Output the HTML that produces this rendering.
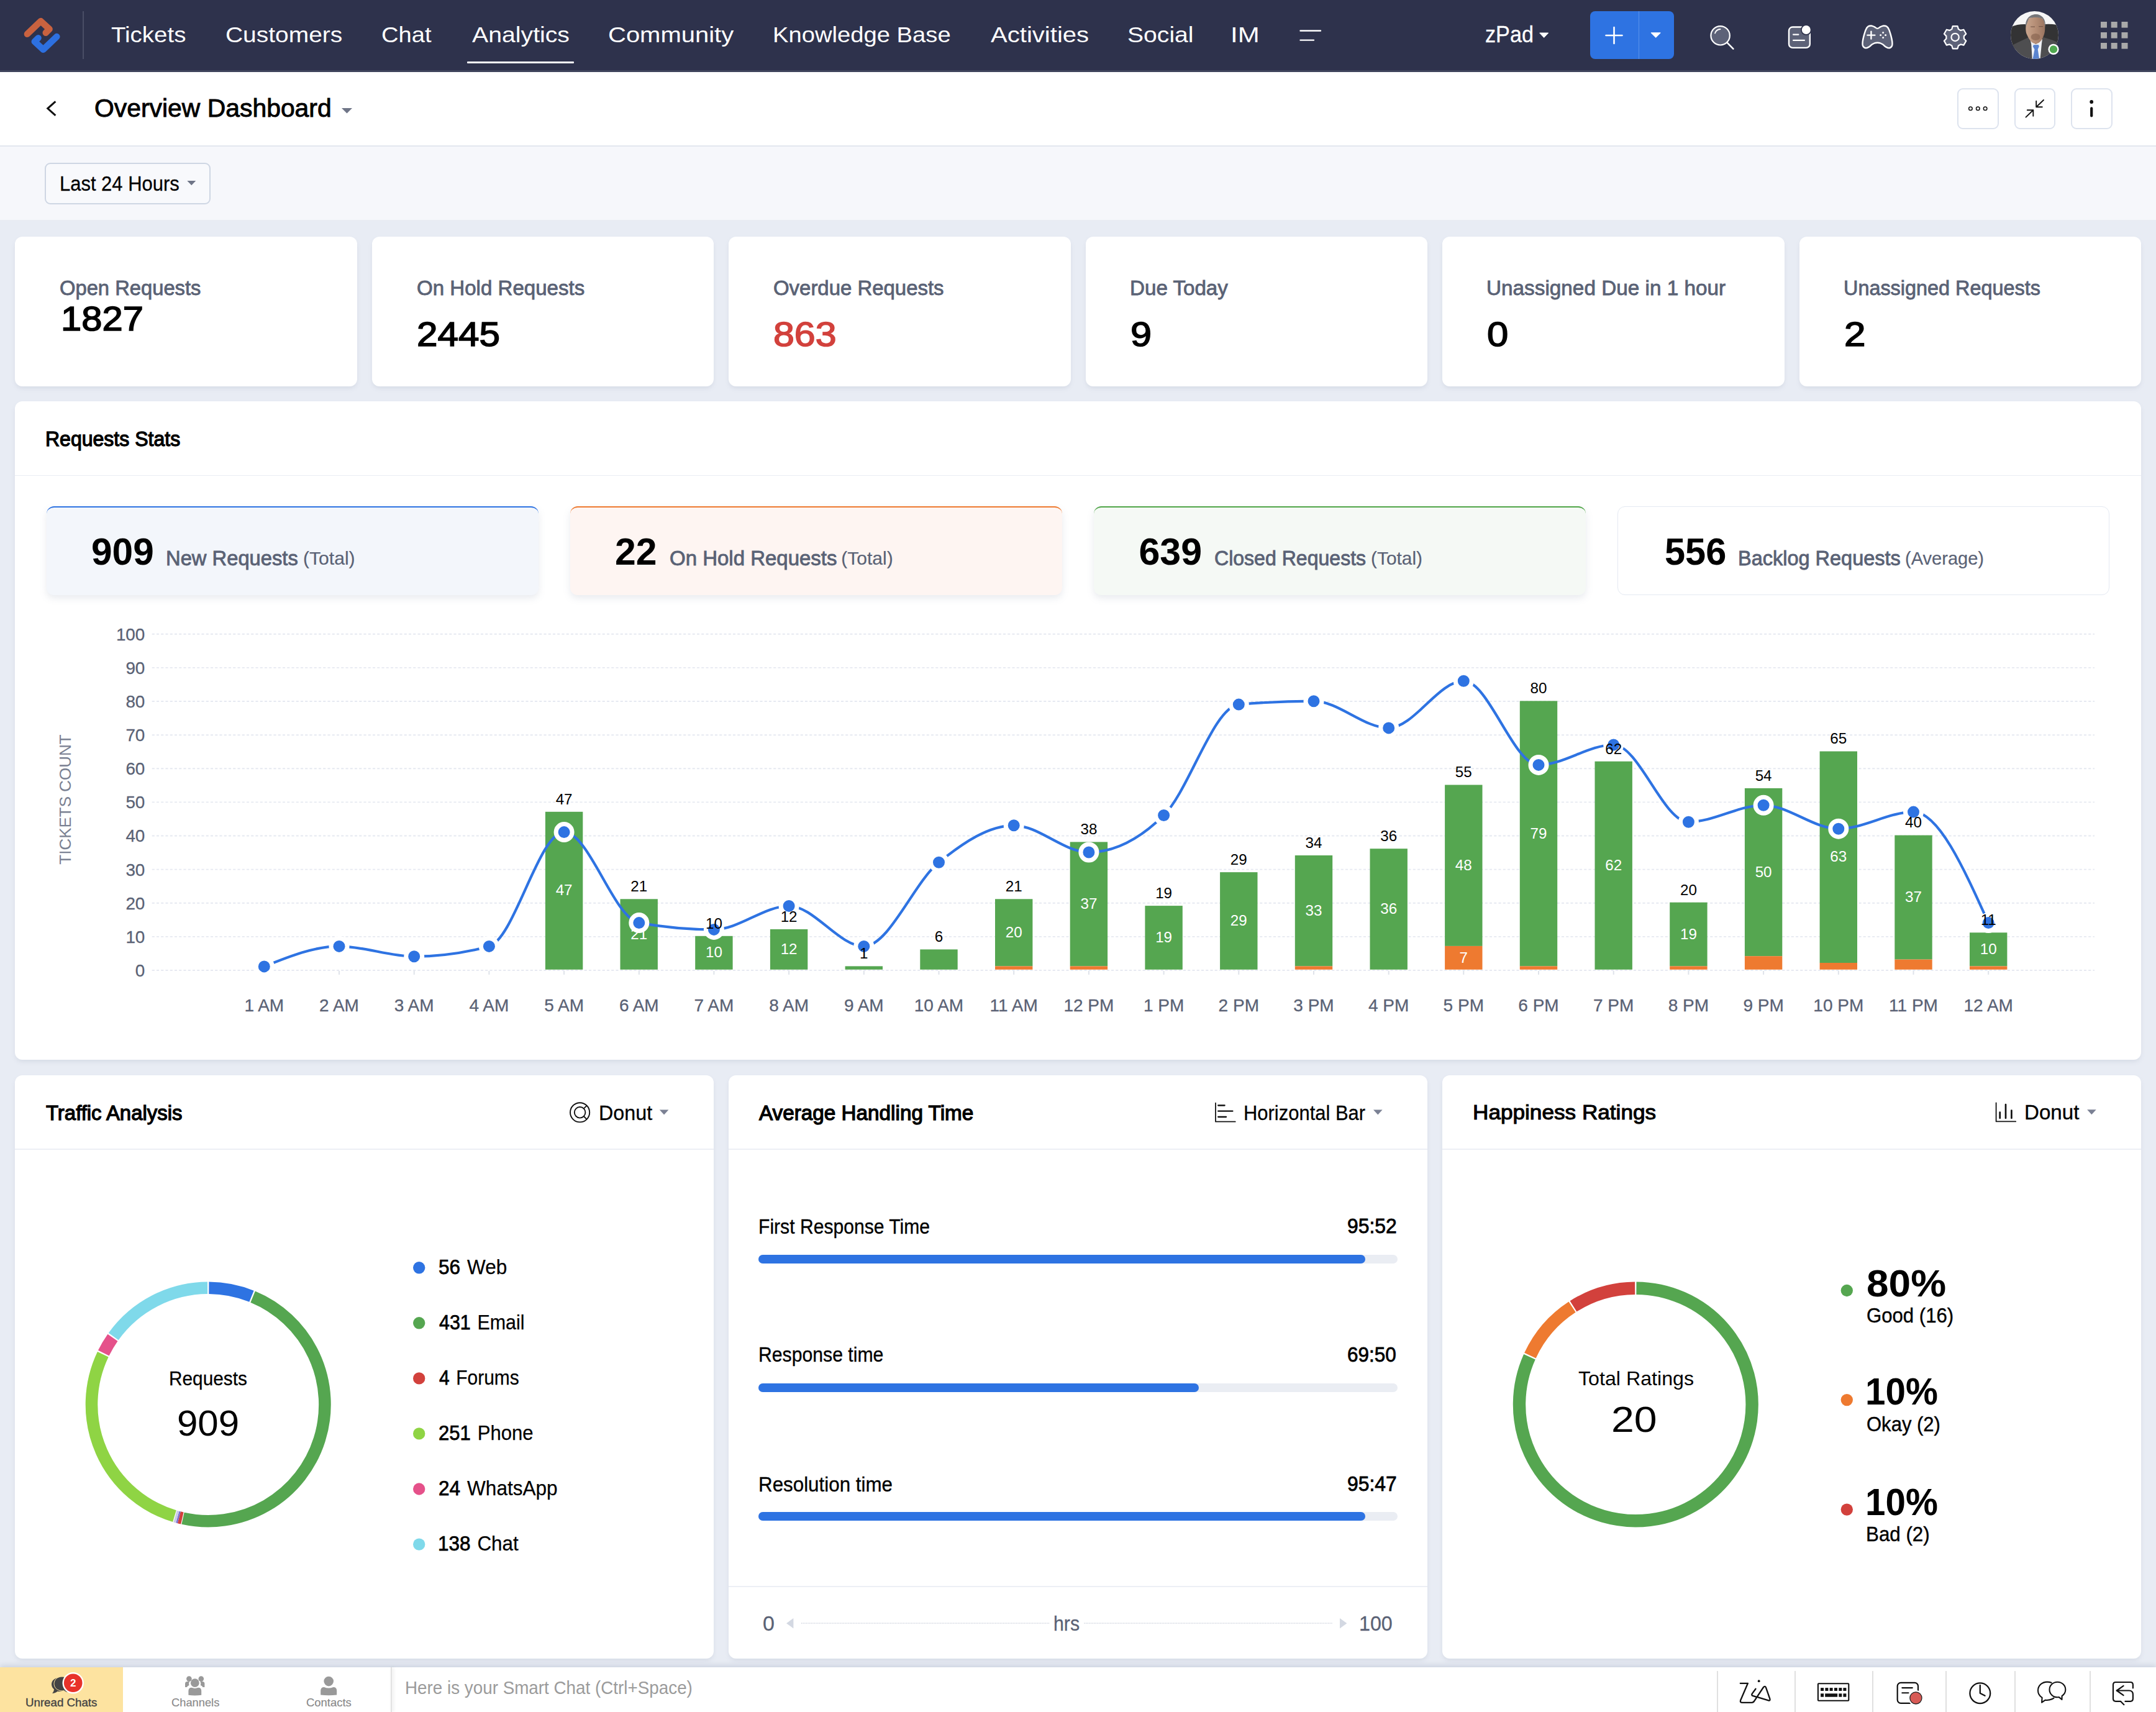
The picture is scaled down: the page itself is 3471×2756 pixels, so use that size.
<!DOCTYPE html>
<html lang="en"><head><meta charset="utf-8"><title>Overview Dashboard</title>
<style>
html,body{margin:0;padding:0;}
body{width:3471px;height:2756px;overflow:hidden;background:#e8ecf4;font-family:"Liberation Sans", sans-serif;}
#root{position:relative;width:3471px;height:2756px;overflow:hidden;background:#e8ecf4;}
.t{position:absolute;white-space:nowrap;line-height:1;display:block;transform-origin:0 0;}
.b{position:absolute;box-sizing:border-box;}
.card{position:absolute;background:#fff;border-radius:12px;box-shadow:0 4px 7px -1px rgba(125,135,160,.17);}
svg{position:absolute;left:0;top:0;overflow:visible;}
svg text{font-family:"Liberation Sans", sans-serif;}
</style></head><body><div id="root">

<div class="b" style="left:0;top:0;width:3471px;height:113px;background:#2e324c;"></div>
<div class="b" style="left:0;top:113px;width:3471px;height:2.8px;background:#3f445c;"></div>
<div class="b" style="left:132.5px;top:18px;width:2px;height:77px;background:#4a4e66;"></div>
<span class="t" style="left:179.20px;top:39.20px;font-size:35.8px;color:#fff;transform:scaleX(1.0743);">Tickets</span>
<span class="t" style="left:362.61px;top:39.20px;font-size:35.8px;color:#fff;transform:scaleX(1.0879);">Customers</span>
<span class="t" style="left:613.93px;top:39.20px;font-size:35.8px;color:#fff;transform:scaleX(1.0660);">Chat</span>
<span class="t" style="left:759.70px;top:39.20px;font-size:35.8px;color:#fff;transform:scaleX(1.0960);">Analytics</span>
<span class="t" style="left:979.18px;top:39.20px;font-size:35.8px;color:#fff;transform:scaleX(1.1171);">Community</span>
<span class="t" style="left:1243.97px;top:39.20px;font-size:35.8px;color:#fff;transform:scaleX(1.0668);">Knowledge Base</span>
<span class="t" style="left:1594.70px;top:39.20px;font-size:35.8px;color:#fff;transform:scaleX(1.1195);">Activities</span>
<span class="t" style="left:1815.31px;top:39.20px;font-size:35.8px;color:#fff;transform:scaleX(1.0926);">Social</span>
<span class="t" style="left:1981.28px;top:39.20px;font-size:35.8px;color:#fff;transform:scaleX(1.1725);">IM</span>
<div class="b" style="left:752px;top:99px;width:172px;height:3px;background:#fff;border-radius:1px;"></div>
<span class="t" style="left:2391.06px;top:38.30px;font-size:36.5px;color:#fff;-webkit-text-stroke:0.30px #fff;transform:scaleX(0.9362);">zPad</span>
<div class="b" style="left:2560px;top:18px;width:135px;height:77px;background:#2e73e2;border-radius:8px;"></div>
<div class="b" style="left:2637.5px;top:18px;width:1.5px;height:77px;background:#5a93ea;"></div>
<div class="b" style="left:0;top:115.8px;width:3471px;height:118.4px;background:#fff;"></div>
<div class="b" style="left:0;top:234.2px;width:3471px;height:1.4px;background:#e3e7ef;"></div>
<span class="t" style="left:152.39px;top:154.40px;font-size:40.4px;color:#000;-webkit-text-stroke:0.90px #000;transform:scaleX(1.0121);">Overview Dashboard</span>
<div class="b" style="left:3151.0px;top:141.5px;width:66.5px;height:66px;border:2px solid #dde3ee;border-radius:9px;background:#fff;"></div>
<div class="b" style="left:3242.5px;top:141.5px;width:66.5px;height:66px;border:2px solid #dde3ee;border-radius:9px;background:#fff;"></div>
<div class="b" style="left:3334.0px;top:141.5px;width:66.5px;height:66px;border:2px solid #dde3ee;border-radius:9px;background:#fff;"></div>
<div class="b" style="left:0;top:235.6px;width:3471px;height:119px;background:#f6f7fb;border-bottom:1.4px solid #e9ecf2;"></div>
<div class="b" style="left:71.8px;top:262px;width:267.4px;height:67px;border:2px solid #ced6e3;border-radius:9px;background:#f8f9fc;"></div>
<span class="t" style="left:96.35px;top:279.13px;font-size:33.4px;color:#000;-webkit-text-stroke:0.30px #000;transform:scaleX(0.9270);">Last 24 Hours</span>
<div class="card" style="left:24.0px;top:380.5px;width:550.5px;height:241px;"></div>
<span class="t" style="left:96.02px;top:447.13px;font-size:33.4px;color:#5a6275;-webkit-text-stroke:0.85px #5a6275;transform:scaleX(0.9803);">Open Requests</span>
<span class="t" style="left:98.15px;top:485.43px;font-size:56.2px;color:#000;-webkit-text-stroke:1.60px #000;transform:scaleX(1.0628);">1827</span>
<div class="card" style="left:598.5px;top:380.5px;width:550.5px;height:241px;"></div>
<span class="t" style="left:670.51px;top:447.13px;font-size:33.4px;color:#5a6275;-webkit-text-stroke:0.85px #5a6275;transform:scaleX(0.9906);">On Hold Requests</span>
<span class="t" style="left:670.86px;top:510.23px;font-size:56.2px;color:#000;-webkit-text-stroke:1.60px #000;transform:scaleX(1.0717);">2445</span>
<div class="card" style="left:1173.0px;top:380.5px;width:550.5px;height:241px;"></div>
<span class="t" style="left:1245.01px;top:447.13px;font-size:33.4px;color:#5a6275;-webkit-text-stroke:0.85px #5a6275;transform:scaleX(0.9862);">Overdue Requests</span>
<span class="t" style="left:1245.33px;top:510.23px;font-size:56.2px;color:#d2413c;-webkit-text-stroke:1.60px #d2413c;transform:scaleX(1.0838);">863</span>
<div class="card" style="left:1747.5px;top:380.5px;width:550.5px;height:241px;"></div>
<span class="t" style="left:1818.51px;top:447.13px;font-size:33.4px;color:#5a6275;-webkit-text-stroke:0.85px #5a6275;transform:scaleX(0.9928);">Due Today</span>
<span class="t" style="left:1819.82px;top:510.23px;font-size:56.2px;color:#000;-webkit-text-stroke:1.60px #000;transform:scaleX(1.0889);">9</span>
<div class="card" style="left:2322.0px;top:380.5px;width:550.5px;height:241px;"></div>
<span class="t" style="left:2393.01px;top:447.13px;font-size:33.4px;color:#5a6275;-webkit-text-stroke:0.85px #5a6275;transform:scaleX(0.9975);">Unassigned Due in 1 hour</span>
<span class="t" style="left:2394.31px;top:510.23px;font-size:56.2px;color:#000;-webkit-text-stroke:1.60px #000;transform:scaleX(1.0964);">0</span>
<div class="card" style="left:2896.5px;top:380.5px;width:550.5px;height:241px;"></div>
<span class="t" style="left:2967.56px;top:447.13px;font-size:33.4px;color:#5a6275;-webkit-text-stroke:0.85px #5a6275;transform:scaleX(0.9701);">Unassigned Requests</span>
<span class="t" style="left:2968.79px;top:510.23px;font-size:56.2px;color:#000;-webkit-text-stroke:1.60px #000;transform:scaleX(1.1037);">2</span>
<div class="card" style="left:24px;top:646px;width:3423px;height:1059.5px;"></div>
<div class="b" style="left:24px;top:764.6px;width:3423px;height:1.8px;background:#e9edf4;"></div>
<span class="t" style="left:72.86px;top:690.47px;font-size:33.0px;color:#000;-webkit-text-stroke:1.30px #000;transform:scaleX(0.9703);">Requests Stats</span>
<div class="b" style="left:74.8px;top:815px;width:792.5px;height:143.2px;background:#f3f6fb;border-radius:12px;border-top:2.2px solid #2e73e2;box-shadow:0 5px 12px rgba(125,135,160,.17);"></div>
<span class="t" style="left:147.02px;top:858.36px;font-size:61.0px;color:#000;font-weight:bold;transform:scaleX(0.9903);">909</span>
<span class="t" style="left:267.08px;top:881.02px;font-size:34.0px;color:#5a6275;-webkit-text-stroke:0.90px #5a6275;transform:scaleX(0.9624);">New Requests</span>
<span class="t" style="left:487.50px;top:884.40px;font-size:30.0px;color:#5a6275;-webkit-text-stroke:0.20px #5a6275;transform:scaleX(1.0030);">(Total)</span>
<div class="b" style="left:917.8px;top:815px;width:792.5px;height:143.2px;background:#fef5f2;border-radius:12px;border-top:2.2px solid #ee7a30;box-shadow:0 5px 12px rgba(125,135,160,.17);"></div>
<span class="t" style="left:990.01px;top:858.36px;font-size:61.0px;color:#000;font-weight:bold;transform:scaleX(0.9949);">22</span>
<span class="t" style="left:1077.73px;top:881.02px;font-size:34.0px;color:#5a6275;-webkit-text-stroke:0.90px #5a6275;transform:scaleX(0.9699);">On Hold Requests</span>
<span class="t" style="left:1354.30px;top:884.40px;font-size:30.0px;color:#5a6275;-webkit-text-stroke:0.20px #5a6275;">(Total)</span>
<div class="b" style="left:1760.7px;top:815px;width:792.5px;height:143.2px;background:#f5f9f5;border-radius:12px;border-top:2.2px solid #4fa547;box-shadow:0 5px 12px rgba(125,135,160,.17);"></div>
<span class="t" style="left:1833.40px;top:858.36px;font-size:61.0px;color:#000;font-weight:bold;">639</span>
<span class="t" style="left:1955.26px;top:881.02px;font-size:34.0px;color:#5a6275;-webkit-text-stroke:0.90px #5a6275;transform:scaleX(0.9427);">Closed Requests</span>
<span class="t" style="left:2207.10px;top:884.40px;font-size:30.0px;color:#5a6275;-webkit-text-stroke:0.20px #5a6275;transform:scaleX(0.9956);">(Total)</span>
<div class="b" style="left:2603.7px;top:815px;width:792.5px;height:143.2px;background:#fff;border-radius:12px;border:1.8px solid #e4e9f2;"></div>
<span class="t" style="left:2679.52px;top:858.36px;font-size:61.0px;color:#000;font-weight:bold;transform:scaleX(0.9752);">556</span>
<span class="t" style="left:2798.09px;top:881.02px;font-size:34.0px;color:#5a6275;-webkit-text-stroke:0.90px #5a6275;transform:scaleX(0.9552);">Backlog Requests</span>
<span class="t" style="left:3067.03px;top:884.40px;font-size:30.0px;color:#5a6275;-webkit-text-stroke:0.20px #5a6275;transform:scaleX(0.9684);">(Average)</span>
<svg width="3471" height="2756" viewBox="0 0 3471 2756">
<line x1="244.7" y1="1562.0" x2="3372" y2="1562.0" stroke="#e6e9f1" stroke-width="1.9" stroke-dasharray="4.1 3.15"/>
<text x="233.3" y="1571.9" font-size="27.8" fill="#5a6275" stroke="#5a6275" stroke-width="0.3" text-anchor="end">0</text>
<line x1="244.7" y1="1507.9" x2="3372" y2="1507.9" stroke="#e6e9f1" stroke-width="1.9" stroke-dasharray="4.1 3.15"/>
<text x="233.3" y="1517.8" font-size="27.8" fill="#5a6275" stroke="#5a6275" stroke-width="0.3" text-anchor="end">10</text>
<line x1="244.7" y1="1453.8" x2="3372" y2="1453.8" stroke="#e6e9f1" stroke-width="1.9" stroke-dasharray="4.1 3.15"/>
<text x="233.3" y="1463.7" font-size="27.8" fill="#5a6275" stroke="#5a6275" stroke-width="0.3" text-anchor="end">20</text>
<line x1="244.7" y1="1399.6" x2="3372" y2="1399.6" stroke="#e6e9f1" stroke-width="1.9" stroke-dasharray="4.1 3.15"/>
<text x="233.3" y="1409.5" font-size="27.8" fill="#5a6275" stroke="#5a6275" stroke-width="0.3" text-anchor="end">30</text>
<line x1="244.7" y1="1345.5" x2="3372" y2="1345.5" stroke="#e6e9f1" stroke-width="1.9" stroke-dasharray="4.1 3.15"/>
<text x="233.3" y="1355.4" font-size="27.8" fill="#5a6275" stroke="#5a6275" stroke-width="0.3" text-anchor="end">40</text>
<line x1="244.7" y1="1291.4" x2="3372" y2="1291.4" stroke="#e6e9f1" stroke-width="1.9" stroke-dasharray="4.1 3.15"/>
<text x="233.3" y="1301.3" font-size="27.8" fill="#5a6275" stroke="#5a6275" stroke-width="0.3" text-anchor="end">50</text>
<line x1="244.7" y1="1237.3" x2="3372" y2="1237.3" stroke="#e6e9f1" stroke-width="1.9" stroke-dasharray="4.1 3.15"/>
<text x="233.3" y="1247.2" font-size="27.8" fill="#5a6275" stroke="#5a6275" stroke-width="0.3" text-anchor="end">60</text>
<line x1="244.7" y1="1183.2" x2="3372" y2="1183.2" stroke="#e6e9f1" stroke-width="1.9" stroke-dasharray="4.1 3.15"/>
<text x="233.3" y="1193.1" font-size="27.8" fill="#5a6275" stroke="#5a6275" stroke-width="0.3" text-anchor="end">70</text>
<line x1="244.7" y1="1129.0" x2="3372" y2="1129.0" stroke="#e6e9f1" stroke-width="1.9" stroke-dasharray="4.1 3.15"/>
<text x="233.3" y="1138.9" font-size="27.8" fill="#5a6275" stroke="#5a6275" stroke-width="0.3" text-anchor="end">80</text>
<line x1="244.7" y1="1074.9" x2="3372" y2="1074.9" stroke="#e6e9f1" stroke-width="1.9" stroke-dasharray="4.1 3.15"/>
<text x="233.3" y="1084.8" font-size="27.8" fill="#5a6275" stroke="#5a6275" stroke-width="0.3" text-anchor="end">90</text>
<line x1="244.7" y1="1020.8" x2="3372" y2="1020.8" stroke="#e6e9f1" stroke-width="1.9" stroke-dasharray="4.1 3.15"/>
<text x="233.3" y="1030.7" font-size="27.8" fill="#5a6275" stroke="#5a6275" stroke-width="0.3" text-anchor="end">100</text>
<line x1="425.3" y1="1563.0" x2="425.3" y2="1569.0" stroke="#dfe3ea" stroke-width="2"/>
<text x="425.3" y="1628.4" font-size="28" fill="#5a6275" stroke="#5a6275" stroke-width="0.3" text-anchor="middle">1 AM</text>
<line x1="546.0" y1="1563.0" x2="546.0" y2="1569.0" stroke="#dfe3ea" stroke-width="2"/>
<text x="546.0" y="1628.4" font-size="28" fill="#5a6275" stroke="#5a6275" stroke-width="0.3" text-anchor="middle">2 AM</text>
<line x1="666.7" y1="1563.0" x2="666.7" y2="1569.0" stroke="#dfe3ea" stroke-width="2"/>
<text x="666.7" y="1628.4" font-size="28" fill="#5a6275" stroke="#5a6275" stroke-width="0.3" text-anchor="middle">3 AM</text>
<line x1="787.4" y1="1563.0" x2="787.4" y2="1569.0" stroke="#dfe3ea" stroke-width="2"/>
<text x="787.4" y="1628.4" font-size="28" fill="#5a6275" stroke="#5a6275" stroke-width="0.3" text-anchor="middle">4 AM</text>
<line x1="908.1" y1="1563.0" x2="908.1" y2="1569.0" stroke="#dfe3ea" stroke-width="2"/>
<text x="908.1" y="1628.4" font-size="28" fill="#5a6275" stroke="#5a6275" stroke-width="0.3" text-anchor="middle">5 AM</text>
<line x1="1028.8" y1="1563.0" x2="1028.8" y2="1569.0" stroke="#dfe3ea" stroke-width="2"/>
<text x="1028.8" y="1628.4" font-size="28" fill="#5a6275" stroke="#5a6275" stroke-width="0.3" text-anchor="middle">6 AM</text>
<line x1="1149.4" y1="1563.0" x2="1149.4" y2="1569.0" stroke="#dfe3ea" stroke-width="2"/>
<text x="1149.4" y="1628.4" font-size="28" fill="#5a6275" stroke="#5a6275" stroke-width="0.3" text-anchor="middle">7 AM</text>
<line x1="1270.1" y1="1563.0" x2="1270.1" y2="1569.0" stroke="#dfe3ea" stroke-width="2"/>
<text x="1270.1" y="1628.4" font-size="28" fill="#5a6275" stroke="#5a6275" stroke-width="0.3" text-anchor="middle">8 AM</text>
<line x1="1390.8" y1="1563.0" x2="1390.8" y2="1569.0" stroke="#dfe3ea" stroke-width="2"/>
<text x="1390.8" y="1628.4" font-size="28" fill="#5a6275" stroke="#5a6275" stroke-width="0.3" text-anchor="middle">9 AM</text>
<line x1="1511.5" y1="1563.0" x2="1511.5" y2="1569.0" stroke="#dfe3ea" stroke-width="2"/>
<text x="1511.5" y="1628.4" font-size="28" fill="#5a6275" stroke="#5a6275" stroke-width="0.3" text-anchor="middle">10 AM</text>
<line x1="1632.2" y1="1563.0" x2="1632.2" y2="1569.0" stroke="#dfe3ea" stroke-width="2"/>
<text x="1632.2" y="1628.4" font-size="28" fill="#5a6275" stroke="#5a6275" stroke-width="0.3" text-anchor="middle">11 AM</text>
<line x1="1752.9" y1="1563.0" x2="1752.9" y2="1569.0" stroke="#dfe3ea" stroke-width="2"/>
<text x="1752.9" y="1628.4" font-size="28" fill="#5a6275" stroke="#5a6275" stroke-width="0.3" text-anchor="middle">12 PM</text>
<line x1="1873.6" y1="1563.0" x2="1873.6" y2="1569.0" stroke="#dfe3ea" stroke-width="2"/>
<text x="1873.6" y="1628.4" font-size="28" fill="#5a6275" stroke="#5a6275" stroke-width="0.3" text-anchor="middle">1 PM</text>
<line x1="1994.3" y1="1563.0" x2="1994.3" y2="1569.0" stroke="#dfe3ea" stroke-width="2"/>
<text x="1994.3" y="1628.4" font-size="28" fill="#5a6275" stroke="#5a6275" stroke-width="0.3" text-anchor="middle">2 PM</text>
<line x1="2115.0" y1="1563.0" x2="2115.0" y2="1569.0" stroke="#dfe3ea" stroke-width="2"/>
<text x="2115.0" y="1628.4" font-size="28" fill="#5a6275" stroke="#5a6275" stroke-width="0.3" text-anchor="middle">3 PM</text>
<line x1="2235.7" y1="1563.0" x2="2235.7" y2="1569.0" stroke="#dfe3ea" stroke-width="2"/>
<text x="2235.7" y="1628.4" font-size="28" fill="#5a6275" stroke="#5a6275" stroke-width="0.3" text-anchor="middle">4 PM</text>
<line x1="2356.3" y1="1563.0" x2="2356.3" y2="1569.0" stroke="#dfe3ea" stroke-width="2"/>
<text x="2356.3" y="1628.4" font-size="28" fill="#5a6275" stroke="#5a6275" stroke-width="0.3" text-anchor="middle">5 PM</text>
<line x1="2477.0" y1="1563.0" x2="2477.0" y2="1569.0" stroke="#dfe3ea" stroke-width="2"/>
<text x="2477.0" y="1628.4" font-size="28" fill="#5a6275" stroke="#5a6275" stroke-width="0.3" text-anchor="middle">6 PM</text>
<line x1="2597.7" y1="1563.0" x2="2597.7" y2="1569.0" stroke="#dfe3ea" stroke-width="2"/>
<text x="2597.7" y="1628.4" font-size="28" fill="#5a6275" stroke="#5a6275" stroke-width="0.3" text-anchor="middle">7 PM</text>
<line x1="2718.4" y1="1563.0" x2="2718.4" y2="1569.0" stroke="#dfe3ea" stroke-width="2"/>
<text x="2718.4" y="1628.4" font-size="28" fill="#5a6275" stroke="#5a6275" stroke-width="0.3" text-anchor="middle">8 PM</text>
<line x1="2839.1" y1="1563.0" x2="2839.1" y2="1569.0" stroke="#dfe3ea" stroke-width="2"/>
<text x="2839.1" y="1628.4" font-size="28" fill="#5a6275" stroke="#5a6275" stroke-width="0.3" text-anchor="middle">9 PM</text>
<line x1="2959.8" y1="1563.0" x2="2959.8" y2="1569.0" stroke="#dfe3ea" stroke-width="2"/>
<text x="2959.8" y="1628.4" font-size="28" fill="#5a6275" stroke="#5a6275" stroke-width="0.3" text-anchor="middle">10 PM</text>
<line x1="3080.5" y1="1563.0" x2="3080.5" y2="1569.0" stroke="#dfe3ea" stroke-width="2"/>
<text x="3080.5" y="1628.4" font-size="28" fill="#5a6275" stroke="#5a6275" stroke-width="0.3" text-anchor="middle">11 PM</text>
<line x1="3201.2" y1="1563.0" x2="3201.2" y2="1569.0" stroke="#dfe3ea" stroke-width="2"/>
<text x="3201.2" y="1628.4" font-size="28" fill="#5a6275" stroke="#5a6275" stroke-width="0.3" text-anchor="middle">12 AM</text>
<text transform="translate(114,1287) rotate(-90)" font-size="26" fill="#7a8192" text-anchor="middle">TICKETS COUNT</text>
<rect x="877.9" y="1306.8" width="60.4" height="254.0" fill="#55a650"/>
<text x="908.1" y="1441.4" font-size="24.2" fill="#fff" text-anchor="middle">47</text>
<rect x="998.5" y="1447.3" width="60.4" height="113.5" fill="#55a650"/>
<text x="1028.8" y="1511.6" font-size="24.2" fill="#fff" text-anchor="middle">21</text>
<rect x="1119.2" y="1506.8" width="60.4" height="54.0" fill="#55a650"/>
<text x="1149.4" y="1541.4" font-size="24.2" fill="#fff" text-anchor="middle">10</text>
<rect x="1239.9" y="1495.9" width="60.4" height="64.9" fill="#55a650"/>
<text x="1270.1" y="1536.0" font-size="24.2" fill="#fff" text-anchor="middle">12</text>
<rect x="1360.6" y="1555.4" width="60.4" height="5.4" fill="#55a650"/>
<rect x="1481.3" y="1528.4" width="60.4" height="32.4" fill="#55a650"/>
<rect x="1602.0" y="1447.3" width="60.4" height="108.1" fill="#55a650"/>
<rect x="1602.0" y="1555.4" width="60.4" height="5.4" fill="#ee7a30"/>
<text x="1632.2" y="1508.9" font-size="24.2" fill="#fff" text-anchor="middle">20</text>
<rect x="1722.7" y="1355.4" width="60.4" height="200.0" fill="#55a650"/>
<rect x="1722.7" y="1555.4" width="60.4" height="5.4" fill="#ee7a30"/>
<text x="1752.9" y="1463.0" font-size="24.2" fill="#fff" text-anchor="middle">37</text>
<rect x="1843.4" y="1458.1" width="60.4" height="102.7" fill="#55a650"/>
<text x="1873.6" y="1517.1" font-size="24.2" fill="#fff" text-anchor="middle">19</text>
<rect x="1964.1" y="1404.1" width="60.4" height="156.7" fill="#55a650"/>
<text x="1994.3" y="1490.0" font-size="24.2" fill="#fff" text-anchor="middle">29</text>
<rect x="2084.8" y="1377.0" width="60.4" height="178.4" fill="#55a650"/>
<rect x="2084.8" y="1555.4" width="60.4" height="5.4" fill="#ee7a30"/>
<text x="2115.0" y="1473.8" font-size="24.2" fill="#fff" text-anchor="middle">33</text>
<rect x="2205.5" y="1366.2" width="60.4" height="194.6" fill="#55a650"/>
<text x="2235.7" y="1471.1" font-size="24.2" fill="#fff" text-anchor="middle">36</text>
<rect x="2326.1" y="1263.5" width="60.4" height="259.4" fill="#55a650"/>
<rect x="2326.1" y="1523.0" width="60.4" height="37.8" fill="#ee7a30"/>
<text x="2356.3" y="1400.8" font-size="24.2" fill="#fff" text-anchor="middle">48</text>
<text x="2356.3" y="1549.5" font-size="24.2" fill="#fff" text-anchor="middle">7</text>
<rect x="2446.8" y="1128.4" width="60.4" height="427.0" fill="#55a650"/>
<rect x="2446.8" y="1555.4" width="60.4" height="5.4" fill="#ee7a30"/>
<text x="2477.0" y="1349.5" font-size="24.2" fill="#fff" text-anchor="middle">79</text>
<rect x="2567.5" y="1225.7" width="60.4" height="335.1" fill="#55a650"/>
<text x="2597.7" y="1400.8" font-size="24.2" fill="#fff" text-anchor="middle">62</text>
<rect x="2688.2" y="1452.7" width="60.4" height="102.7" fill="#55a650"/>
<rect x="2688.2" y="1555.4" width="60.4" height="5.4" fill="#ee7a30"/>
<text x="2718.4" y="1511.6" font-size="24.2" fill="#fff" text-anchor="middle">19</text>
<rect x="2808.9" y="1268.9" width="60.4" height="270.3" fill="#55a650"/>
<rect x="2808.9" y="1539.2" width="60.4" height="21.6" fill="#ee7a30"/>
<text x="2839.1" y="1411.7" font-size="24.2" fill="#fff" text-anchor="middle">50</text>
<rect x="2929.6" y="1209.5" width="60.4" height="340.5" fill="#55a650"/>
<rect x="2929.6" y="1550.0" width="60.4" height="10.8" fill="#ee7a30"/>
<text x="2959.8" y="1387.3" font-size="24.2" fill="#fff" text-anchor="middle">63</text>
<rect x="3050.3" y="1344.6" width="60.4" height="200.0" fill="#55a650"/>
<rect x="3050.3" y="1544.6" width="60.4" height="16.2" fill="#ee7a30"/>
<text x="3080.5" y="1452.2" font-size="24.2" fill="#fff" text-anchor="middle">37</text>
<rect x="3171.0" y="1501.3" width="60.4" height="54.0" fill="#55a650"/>
<rect x="3171.0" y="1555.4" width="60.4" height="5.4" fill="#ee7a30"/>
<text x="3201.2" y="1536.0" font-size="24.2" fill="#fff" text-anchor="middle">10</text>
<path d="M425.3,1555.9C465.5,1539.7 505.8,1523.4 546.0,1523.4C586.2,1523.4 626.5,1539.7 666.7,1539.7C706.9,1539.7 747.1,1534.3 787.4,1523.4C827.6,1512.6 867.8,1339.6 908.1,1339.6C948.3,1339.6 988.5,1478.4 1028.8,1485.6C1069.0,1492.8 1109.2,1496.4 1149.4,1496.4C1189.7,1496.4 1229.9,1458.5 1270.1,1458.5C1310.4,1458.5 1350.6,1523.4 1390.8,1523.4C1431.0,1523.4 1471.3,1420.7 1511.5,1388.2C1551.7,1355.8 1592.0,1328.8 1632.2,1328.8C1672.4,1328.8 1712.7,1372.0 1752.9,1372.0C1793.1,1372.0 1833.3,1352.2 1873.6,1312.5C1913.8,1272.9 1954.0,1137.7 1994.3,1134.1C2034.5,1130.5 2074.7,1128.7 2115.0,1128.7C2155.2,1128.7 2195.4,1171.9 2235.7,1171.9C2275.9,1171.9 2316.1,1096.2 2356.3,1096.2C2396.6,1096.2 2436.8,1231.4 2477.0,1231.4C2517.3,1231.4 2557.5,1199.0 2597.7,1199.0C2638.0,1199.0 2678.2,1323.3 2718.4,1323.3C2758.6,1323.3 2798.9,1296.3 2839.1,1296.3C2879.3,1296.3 2919.6,1334.2 2959.8,1334.2C3000.0,1334.2 3040.2,1307.1 3080.5,1307.1C3120.7,1307.1 3160.9,1396.4 3201.2,1485.6" fill="none" stroke="#2e73e2" stroke-width="4.2" stroke-linecap="round" stroke-linejoin="round"/>
<circle cx="425.3" cy="1555.9" r="13" fill="#2e73e2" stroke="#fff" stroke-width="7"/>
<circle cx="546.0" cy="1523.4" r="13" fill="#2e73e2" stroke="#fff" stroke-width="7"/>
<circle cx="666.7" cy="1539.7" r="13" fill="#2e73e2" stroke="#fff" stroke-width="7"/>
<circle cx="787.4" cy="1523.4" r="13" fill="#2e73e2" stroke="#fff" stroke-width="7"/>
<circle cx="908.1" cy="1339.6" r="13" fill="#2e73e2" stroke="#fff" stroke-width="7"/>
<circle cx="1028.8" cy="1485.6" r="13" fill="#2e73e2" stroke="#fff" stroke-width="7"/>
<circle cx="1149.4" cy="1496.4" r="13" fill="#2e73e2" stroke="#fff" stroke-width="7"/>
<circle cx="1270.1" cy="1458.5" r="13" fill="#2e73e2" stroke="#fff" stroke-width="7"/>
<circle cx="1390.8" cy="1523.4" r="13" fill="#2e73e2" stroke="#fff" stroke-width="7"/>
<circle cx="1511.5" cy="1388.2" r="13" fill="#2e73e2" stroke="#fff" stroke-width="7"/>
<circle cx="1632.2" cy="1328.8" r="13" fill="#2e73e2" stroke="#fff" stroke-width="7"/>
<circle cx="1752.9" cy="1372.0" r="13" fill="#2e73e2" stroke="#fff" stroke-width="7"/>
<circle cx="1873.6" cy="1312.5" r="13" fill="#2e73e2" stroke="#fff" stroke-width="7"/>
<circle cx="1994.3" cy="1134.1" r="13" fill="#2e73e2" stroke="#fff" stroke-width="7"/>
<circle cx="2115.0" cy="1128.7" r="13" fill="#2e73e2" stroke="#fff" stroke-width="7"/>
<circle cx="2235.7" cy="1171.9" r="13" fill="#2e73e2" stroke="#fff" stroke-width="7"/>
<circle cx="2356.3" cy="1096.2" r="13" fill="#2e73e2" stroke="#fff" stroke-width="7"/>
<circle cx="2477.0" cy="1231.4" r="13" fill="#2e73e2" stroke="#fff" stroke-width="7"/>
<circle cx="2597.7" cy="1199.0" r="13" fill="#2e73e2" stroke="#fff" stroke-width="7"/>
<circle cx="2718.4" cy="1323.3" r="13" fill="#2e73e2" stroke="#fff" stroke-width="7"/>
<circle cx="2839.1" cy="1296.3" r="13" fill="#2e73e2" stroke="#fff" stroke-width="7"/>
<circle cx="2959.8" cy="1334.2" r="13" fill="#2e73e2" stroke="#fff" stroke-width="7"/>
<circle cx="3080.5" cy="1307.1" r="13" fill="#2e73e2" stroke="#fff" stroke-width="7"/>
<circle cx="3201.2" cy="1485.6" r="13" fill="#2e73e2" stroke="#fff" stroke-width="7"/>
<text x="908.1" y="1294.6" font-size="24.2" fill="#000" text-anchor="middle">47</text>
<text x="1028.8" y="1435.1" font-size="24.2" fill="#000" text-anchor="middle">21</text>
<text x="1149.4" y="1494.5" font-size="24.2" fill="#000" text-anchor="middle">10</text>
<text x="1270.1" y="1483.7" font-size="24.2" fill="#000" text-anchor="middle">12</text>
<text x="1390.8" y="1543.2" font-size="24.2" fill="#000" text-anchor="middle">1</text>
<text x="1511.5" y="1516.2" font-size="24.2" fill="#000" text-anchor="middle">6</text>
<text x="1632.2" y="1435.1" font-size="24.2" fill="#000" text-anchor="middle">21</text>
<text x="1752.9" y="1343.2" font-size="24.2" fill="#000" text-anchor="middle">38</text>
<text x="1873.6" y="1445.9" font-size="24.2" fill="#000" text-anchor="middle">19</text>
<text x="1994.3" y="1391.9" font-size="24.2" fill="#000" text-anchor="middle">29</text>
<text x="2115.0" y="1364.8" font-size="24.2" fill="#000" text-anchor="middle">34</text>
<text x="2235.7" y="1354.0" font-size="24.2" fill="#000" text-anchor="middle">36</text>
<text x="2356.3" y="1251.3" font-size="24.2" fill="#000" text-anchor="middle">55</text>
<text x="2477.0" y="1116.2" font-size="24.2" fill="#000" text-anchor="middle">80</text>
<text x="2597.7" y="1213.5" font-size="24.2" fill="#000" text-anchor="middle">62</text>
<text x="2718.4" y="1440.5" font-size="24.2" fill="#000" text-anchor="middle">20</text>
<text x="2839.1" y="1256.7" font-size="24.2" fill="#000" text-anchor="middle">54</text>
<text x="2959.8" y="1197.3" font-size="24.2" fill="#000" text-anchor="middle">65</text>
<text x="3080.5" y="1332.4" font-size="24.2" fill="#000" text-anchor="middle">40</text>
<text x="3201.2" y="1489.1" font-size="24.2" fill="#000" text-anchor="middle">11</text>
</svg>
<div class="card" style="left:24.0px;top:1731px;width:1125px;height:939px;"></div>
<div class="b" style="left:24.0px;top:1848.5px;width:1125px;height:2px;background:#eceff5;"></div>
<div class="card" style="left:1173.0px;top:1731px;width:1125px;height:939px;"></div>
<div class="b" style="left:1173.0px;top:1848.5px;width:1125px;height:2px;background:#eceff5;"></div>
<div class="card" style="left:2322.0px;top:1731px;width:1125px;height:939px;"></div>
<div class="b" style="left:2322.0px;top:1848.5px;width:1125px;height:2px;background:#eceff5;"></div>
<span class="t" style="left:73.60px;top:1775.47px;font-size:33.0px;color:#000;-webkit-text-stroke:1.30px #000;transform:scaleX(0.9969);">Traffic Analysis</span>
<span class="t" style="left:963.84px;top:1775.07px;font-size:33.0px;color:#000;-webkit-text-stroke:0.30px #000;transform:scaleX(0.9780);">Donut</span>
<span class="t" style="left:1222.00px;top:1775.47px;font-size:33.0px;color:#000;-webkit-text-stroke:1.30px #000;transform:scaleX(1.0083);">Average Handling Time</span>
<span class="t" style="left:2002.12px;top:1775.07px;font-size:33.0px;color:#000;-webkit-text-stroke:0.30px #000;transform:scaleX(0.9377);">Horizontal Bar</span>
<span class="t" style="left:2370.93px;top:1773.02px;font-size:34.0px;color:#000;-webkit-text-stroke:1.10px #000;transform:scaleX(1.0341);">Happiness Ratings</span>
<span class="t" style="left:3258.79px;top:1773.77px;font-size:33.0px;color:#000;-webkit-text-stroke:0.35px #000;transform:scaleX(1.0036);">Donut</span>
<svg width="3471" height="2756" viewBox="0 0 3471 2756">
<path d="M336.35,2073.30A187.70,187.70 0 0 1 404.99,2086.76" fill="none" stroke="#2e73e2" stroke-width="19.6"/>
<path d="M407.12,2087.62A187.70,187.70 0 0 1 294.51,2444.24" fill="none" stroke="#55a650" stroke-width="19.6"/>
<path d="M293.39,2443.98A187.70,187.70 0 0 1 288.34,2442.76" fill="none" stroke="#d2413c" stroke-width="19.6"/>
<path d="M288.34,2442.76A187.70,187.70 0 0 1 285.84,2442.09" fill="none" stroke="#7a6fd0" stroke-width="19.6"/>
<path d="M285.84,2442.09A187.70,187.70 0 0 1 282.09,2441.03" fill="none" stroke="#c9c9e8" stroke-width="19.6"/>
<path d="M280.99,2440.70A187.70,187.70 0 0 1 165.77,2180.22" fill="none" stroke="#8fd444" stroke-width="19.6"/>
<path d="M166.77,2178.15A187.70,187.70 0 0 1 181.44,2153.35" fill="none" stroke="#e5518a" stroke-width="19.6"/>
<path d="M182.77,2151.48A187.70,187.70 0 0 1 334.05,2073.30" fill="none" stroke="#7fd9ea" stroke-width="19.6"/>
<path d="M2634.44,2073.70A187.30,187.30 0 1 1 2462.45,2184.23" fill="none" stroke="#55a650" stroke-width="20.4"/>
<path d="M2463.40,2182.15A187.30,187.30 0 0 1 2531.08,2104.05" fill="none" stroke="#ee7a30" stroke-width="20.4"/>
<path d="M2533.00,2102.82A187.30,187.30 0 0 1 2632.16,2073.70" fill="none" stroke="#d2413c" stroke-width="20.4"/>
<circle cx="674.7" cy="2040.8" r="9.7" fill="#2e73e2"/>
<circle cx="674.7" cy="2129.8" r="9.7" fill="#55a650"/>
<circle cx="674.7" cy="2218.9" r="9.7" fill="#d2413c"/>
<circle cx="674.7" cy="2307.9" r="9.7" fill="#8fd444"/>
<circle cx="674.7" cy="2397.0" r="9.7" fill="#e5518a"/>
<circle cx="674.7" cy="2486.1" r="9.7" fill="#7fd9ea"/>
<circle cx="2973.3" cy="2077.5" r="9.7" fill="#55a650"/>
<circle cx="2973.3" cy="2253.6" r="9.7" fill="#ee7a30"/>
<circle cx="2973.3" cy="2430.1" r="9.7" fill="#d2413c"/>
</svg>
<span class="t" style="left:271.91px;top:2204.24px;font-size:31.5px;color:#000;-webkit-text-stroke:0.30px #000;transform:scaleX(0.9453);">Requests</span>
<span class="t" style="left:284.73px;top:2262.30px;font-size:58.0px;color:#000;transform:scaleX(1.0344);">909</span>
<span class="t" style="left:706.35px;top:2022.60px;font-size:33.2px;color:#000;-webkit-text-stroke:0.25px #000;transform:scaleX(0.9493);"><span style="-webkit-text-stroke:0.75px #000;margin-right:2.4px">56</span> Web</span>
<span class="t" style="left:707.30px;top:2111.65px;font-size:33.2px;color:#000;-webkit-text-stroke:0.25px #000;transform:scaleX(0.9172);"><span style="-webkit-text-stroke:0.75px #000;margin-right:2.4px">431</span> Email</span>
<span class="t" style="left:707.30px;top:2200.70px;font-size:33.2px;color:#000;-webkit-text-stroke:0.25px #000;transform:scaleX(0.9038);"><span style="-webkit-text-stroke:0.75px #000;margin-right:2.4px">4</span> Forums</span>
<span class="t" style="left:706.36px;top:2289.75px;font-size:33.2px;color:#000;-webkit-text-stroke:0.25px #000;transform:scaleX(0.9364);"><span style="-webkit-text-stroke:0.75px #000;margin-right:2.4px">251</span> Phone</span>
<span class="t" style="left:706.35px;top:2378.80px;font-size:33.2px;color:#000;-webkit-text-stroke:0.25px #000;transform:scaleX(0.9501);"><span style="-webkit-text-stroke:0.75px #000;margin-right:2.4px">24</span> WhatsApp</span>
<span class="t" style="left:705.41px;top:2467.85px;font-size:33.2px;color:#000;-webkit-text-stroke:0.25px #000;transform:scaleX(0.9468);"><span style="-webkit-text-stroke:0.75px #000;margin-right:2.4px">138</span> Chat</span>
<span class="t" style="left:1221.37px;top:1957.67px;font-size:33.0px;color:#000;-webkit-text-stroke:0.35px #000;transform:scaleX(0.9125);">First Response Time</span>
<span class="t" style="left:2169.44px;top:1957.07px;font-size:33.0px;color:#000;-webkit-text-stroke:0.80px #000;transform:scaleX(0.9648);">95:52</span>
<div class="b" style="left:1220.8px;top:2020.1px;width:1029.3px;height:14.2px;border-radius:7.1px;background:#eaedf3;"></div>
<div class="b" style="left:1220.8px;top:2020.1px;width:977.6px;height:14.2px;border-radius:7.1px;background:#2e73e2;"></div>
<span class="t" style="left:1221.37px;top:2164.27px;font-size:33.0px;color:#000;-webkit-text-stroke:0.35px #000;transform:scaleX(0.9149);">Response time</span>
<span class="t" style="left:2169.45px;top:2163.67px;font-size:33.0px;color:#000;-webkit-text-stroke:0.80px #000;transform:scaleX(0.9529);">69:50</span>
<div class="b" style="left:1220.8px;top:2227.0px;width:1029.3px;height:14.2px;border-radius:7.1px;background:#eaedf3;"></div>
<div class="b" style="left:1220.8px;top:2227.0px;width:709.7px;height:14.2px;border-radius:7.1px;background:#2e73e2;"></div>
<span class="t" style="left:1221.30px;top:2372.67px;font-size:33.0px;color:#000;-webkit-text-stroke:0.35px #000;transform:scaleX(0.9496);">Resolution time</span>
<span class="t" style="left:2169.44px;top:2372.07px;font-size:33.0px;color:#000;-webkit-text-stroke:0.80px #000;transform:scaleX(0.9648);">95:47</span>
<div class="b" style="left:1220.8px;top:2434.2px;width:1029.3px;height:14.2px;border-radius:7.1px;background:#eaedf3;"></div>
<div class="b" style="left:1220.8px;top:2434.2px;width:977.6px;height:14.2px;border-radius:7.1px;background:#2e73e2;"></div>
<div class="b" style="left:1173px;top:2552.5px;width:1125px;height:2px;background:#eceff5;"></div>
<span class="t" style="left:1227.77px;top:2596.87px;font-size:33.0px;color:#5a6275;-webkit-text-stroke:0.30px #5a6275;transform:scaleX(1.0294);">0</span>
<span class="t" style="left:1696.16px;top:2596.87px;font-size:33.0px;color:#5a6275;-webkit-text-stroke:0.30px #5a6275;transform:scaleX(0.9183);">hrs</span>
<span class="t" style="left:2188.05px;top:2596.87px;font-size:33.0px;color:#5a6275;-webkit-text-stroke:0.30px #5a6275;transform:scaleX(0.9771);">100</span>
<span class="t" style="left:2540.70px;top:2202.91px;font-size:32.0px;color:#000;transform:scaleX(1.0061);">Total Ratings</span>
<span class="t" style="left:2594.38px;top:2256.65px;font-size:57.0px;color:#000;transform:scaleX(1.1625);">20</span>
<span class="t" style="left:3005.17px;top:2035.02px;font-size:62.0px;color:#000;font-weight:bold;transform:scaleX(1.0315);">80%</span>
<span class="t" style="left:3004.76px;top:2101.37px;font-size:33.0px;color:#000;-webkit-text-stroke:0.40px #000;transform:scaleX(0.9431);">Good (16)</span>
<span class="t" style="left:3003.38px;top:2209.02px;font-size:62.0px;color:#000;font-weight:bold;transform:scaleX(0.9411);">10%</span>
<span class="t" style="left:3004.76px;top:2276.27px;font-size:33.0px;color:#000;-webkit-text-stroke:0.40px #000;transform:scaleX(0.9398);">Okay (2)</span>
<span class="t" style="left:3003.38px;top:2386.52px;font-size:62.0px;color:#000;font-weight:bold;transform:scaleX(0.9411);">10%</span>
<span class="t" style="left:3003.80px;top:2453.27px;font-size:33.0px;color:#000;-webkit-text-stroke:0.40px #000;transform:scaleX(0.9489);">Bad (2)</span>
<div class="b" style="left:0;top:2683.5px;width:3471px;height:73px;background:#fff;box-shadow:0 -3px 8px rgba(120,135,165,.25);"></div>
<div class="b" style="left:0;top:2683.5px;width:197.5px;height:73px;background:#fde3a0;"></div>
<div class="b" style="left:629px;top:2683.5px;width:2px;height:73px;background:#e2e2e2;box-shadow:2px 0 5px rgba(0,0,0,.12);"></div>
<span class="t" style="left:41.35px;top:2732.73px;font-size:17.8px;color:#444;-webkit-text-stroke:0.35px #444;transform:scaleX(1.0513);">Unread Chats</span>
<span class="t" style="left:275.50px;top:2732.73px;font-size:17.8px;color:#8a8a8a;-webkit-text-stroke:0.15px #8a8a8a;transform:scaleX(1.0288);">Channels</span>
<span class="t" style="left:492.70px;top:2732.73px;font-size:17.8px;color:#8a8a8a;-webkit-text-stroke:0.15px #8a8a8a;transform:scaleX(1.0373);">Contacts</span>
<span class="t" style="left:652.35px;top:2702.20px;font-size:30.0px;color:#9b9b9b;transform:scaleX(0.9270);">Here is your Smart Chat (Ctrl+Space)</span>
<div class="b" style="left:2763.7px;top:2690px;width:2px;height:66px;background:#e0e0e0;"></div>
<div class="b" style="left:2888.5px;top:2690px;width:2px;height:66px;background:#e0e0e0;"></div>
<div class="b" style="left:3014.0px;top:2690px;width:2px;height:66px;background:#e0e0e0;"></div>
<div class="b" style="left:3132.3px;top:2690px;width:2px;height:66px;background:#e0e0e0;"></div>
<div class="b" style="left:3242.9px;top:2690px;width:2px;height:66px;background:#e0e0e0;"></div>
<div class="b" style="left:3364.0px;top:2690px;width:2px;height:66px;background:#e0e0e0;"></div>
<svg width="3471" height="2756" viewBox="0 0 3471 2756" fill="none">
<!-- logo -->
<path d="M43.9,54.8 L65.6,34 L79.6,46.8 L73.7,52.7" stroke="#c9623f" stroke-width="10.4" stroke-linecap="round" stroke-linejoin="round"/>
<path d="M91.4,59 L69.7,79.8 L55.7,67 L61.6,61.1" stroke="#2d70e0" stroke-width="10.4" stroke-linecap="round" stroke-linejoin="round"/>
<!-- nav menu icon -->
<path d="M2093.5,49.5H2126M2093.5,64.6H2115" stroke="#fff" stroke-width="2.4" stroke-linecap="round"/>
<!-- zPad caret -->
<path d="M2478.7,53h14l-7,7.5z" fill="#fff" stroke="#fff" stroke-width="1" stroke-linejoin="round"/>
<!-- plus / caret in blue button -->
<path d="M2598.5,44v26M2585.5,57h26" stroke="#fff" stroke-width="2.6" stroke-linecap="round"/>
<path d="M2658.4,52.8h14.6l-7.3,7.4z" fill="#fff" stroke="#fff" stroke-width="1.2" stroke-linejoin="round"/>
<!-- search -->
<circle cx="2769.6" cy="57.3" r="15.2" fill="#5d6278" stroke="#fff" stroke-width="2.2"/>
<path d="M2761,53.5a9.5,9.5 0 0 1 8.5,-6.5" stroke="#fff" stroke-width="1.8" stroke-linecap="round"/>
<path d="M2780.8,68.8L2790.4,78.6" stroke="#fff" stroke-width="2.6" stroke-linecap="round"/>
<!-- note -->
<rect x="2880" y="43.5" width="33.8" height="33.4" rx="6" fill="#5d6278" stroke="#fff" stroke-width="2.4"/>
<path d="M2887,55.6h8.4M2887,64.8h18" stroke="#fff" stroke-width="2.2" stroke-linecap="round"/>
<circle cx="2907.8" cy="48" r="8.8" fill="#2e324c"/>
<circle cx="2907.8" cy="48" r="7" fill="#fff"/>
<!-- gamepad -->
<path d="M3022.50,45.90C3024.17,45.90 3025.87,43.93 3027.50,43.20C3029.13,42.47 3030.65,41.60 3032.30,41.50C3033.95,41.40 3035.95,41.62 3037.40,42.60C3038.85,43.58 3039.90,45.10 3041.00,47.40C3042.10,49.70 3043.13,53.22 3044.00,56.40C3044.87,59.58 3045.87,63.60 3046.20,66.50C3046.53,69.40 3046.73,72.00 3046.00,73.80C3045.27,75.60 3043.43,77.00 3041.80,77.30C3040.17,77.60 3037.97,76.55 3036.20,75.60C3034.43,74.65 3032.73,72.65 3031.20,71.60C3029.67,70.55 3028.45,69.77 3027.00,69.30C3025.55,68.83 3024.00,68.80 3022.50,68.80C3021.00,68.80 3019.45,68.83 3018.00,69.30C3016.55,69.77 3015.33,70.55 3013.80,71.60C3012.27,72.65 3010.57,74.65 3008.80,75.60C3007.03,76.55 3004.83,77.60 3003.20,77.30C3001.57,77.00 2999.73,75.60 2999.00,73.80C2998.27,72.00 2998.47,69.40 2998.80,66.50C2999.13,63.60 3000.13,59.58 3001.00,56.40C3001.87,53.22 3002.90,49.70 3004.00,47.40C3005.10,45.10 3006.15,43.58 3007.60,42.60C3009.05,41.62 3011.05,41.40 3012.70,41.50C3014.35,41.60 3015.87,42.47 3017.50,43.20C3019.13,43.93 3020.83,45.90 3022.50,45.90Z" fill="#5d6278" stroke="#fff" stroke-width="2.4" stroke-linejoin="round"/>
<path d="M3012.4,50.6v12M3006.4,56.6h12" stroke="#fff" stroke-width="2.4" stroke-linecap="round"/>
<g fill="#fff"><circle cx="3031.6" cy="52.4" r="1.5"/><circle cx="3031.6" cy="60.4" r="1.5"/><circle cx="3027.6" cy="56.4" r="1.5"/><circle cx="3035.6" cy="56.4" r="1.5"/></g>
<!-- gear -->
<g transform="translate(3147.6,59.9) scale(0.93)">
<path id="gearp" d="M-4.2,-19.2h8.4l1.5,5.2l3.9,2.2l5.2,-1.3l4.2,7.3l-3.7,3.9v4.4l3.7,3.9l-4.2,7.3l-5.2,-1.3l-3.9,2.2l-1.5,5.2h-8.4l-1.5,-5.2l-3.9,-2.2l-5.2,1.3l-4.2,-7.3l3.7,-3.9v-4.4l-3.7,-3.9l4.2,-7.3l5.2,1.3l3.9,-2.2z" fill="#5d6278" stroke="#fff" stroke-width="2.4" stroke-linejoin="round"/>
<circle cx="0" cy="0" r="6.6" fill="#5d6278" stroke="#fff" stroke-width="2.4"/>
</g>
<!-- avatar -->
<defs><clipPath id="avc"><circle cx="3275.5" cy="56.5" r="38.5"/></clipPath>
<linearGradient id="fg" x1="0" y1="0" x2="1" y2="0"><stop offset="0" stop-color="#c9a58d"/><stop offset="0.5" stop-color="#b58e76"/><stop offset="1" stop-color="#9a7560"/></linearGradient></defs>
<g clip-path="url(#avc)">
<rect x="3236" y="17" width="80" height="80" fill="#f6f6f6"/>
<path d="M3236.6,43.6 Q3248.7,38.4 3262.9,39.2 L3292.8,38.9 Q3306.5,38.1 3314.4,41.5 L3314.4,75.7 3236.6,78.3 Z" fill="#333334"/>
<polygon points="3237.1,74.1 3247.1,68.9 3265.0,60.5 3277.6,69.4 3289.7,59.9 3304.9,64.7 3314.4,68.9 3314.4,96.8 3237.1,96.8" fill="#4e4e50"/>
<polygon points="3265.0,60.5 3270.2,70.5 3272.3,96.8 3283.4,96.8 3286.5,69.4 3289.7,59.9 3277.6,69.4" fill="#404042"/>
<polygon points="3268.6,64.7 3277.6,71.0 3288.1,62.6 3287.0,69.9 3284.4,96.8 3271.8,96.8 3270.2,71.0" fill="#f0f2f5"/>
<polygon points="3273.9,72.3 3281.8,72.0 3282.8,74.7 3280.7,79.4 3283.4,96.8 3272.3,96.8 3275.5,79.4 3272.8,74.7" fill="#5a84cf"/>
<path d="M3263.9,32.1C3267.1,25.8 3287.0,25.8 3290.2,32.1C3293.3,41.5 3292.8,53.1 3289.7,58.4C3287.0,66.8 3280.7,71.0 3276.5,70.5C3270.2,69.4 3266.0,62.6 3263.4,56.3C3260.2,51.0 3260.8,39.4 3263.9,32.1Z" fill="url(#fg)"/>
<path d="M3261.3,43.6C3259.7,32.1 3267.1,23.1 3277.6,23.1C3287.0,23.1 3294.4,31.0 3292.8,44.2C3291.8,38.4 3290.7,33.1 3288.1,30.0C3282.8,27.4 3272.3,27.4 3266.5,29.5C3265.0,32.1 3263.4,37.3 3261.3,43.6Z" fill="#77777a"/>
<ellipse cx="3277.1" cy="59.4" rx="7.4" ry="5.5" fill="#8a6652" opacity="0.7"/>
<path d="M3269.2,43.1h6.8M3282.3,42.6h6.8" stroke="#6b4f42" stroke-width="1.3" opacity="0.8"/>
</g>
<circle cx="3306" cy="79.4" r="8.6" fill="#fff"/><circle cx="3306" cy="79.4" r="6.2" fill="#4fa84f"/>
<!-- grid -->
<g fill="#a9a9a9">
<rect x="3382" y="35" width="10" height="9.6"/><rect x="3398.7" y="35" width="10" height="9.6"/><rect x="3415.5" y="35" width="10" height="9.6"/>
<rect x="3382" y="52" width="10" height="9.6"/><rect x="3398.7" y="52" width="10" height="9.6"/><rect x="3415.5" y="52" width="10" height="9.6"/>
<rect x="3382" y="69" width="10" height="9.6"/><rect x="3398.7" y="69" width="10" height="9.6"/><rect x="3415.5" y="69" width="10" height="9.6"/>
</g>
<!-- back chevron, title caret -->
<path d="M88.2,164.4L76.8,174.6L88.2,184.8" stroke="#111" stroke-width="3.1" stroke-linecap="square" stroke-linejoin="miter"/>
<path d="M550,174h17l-8.5,8.6z" fill="#6f7587"/>
<!-- header buttons -->
<g stroke="#111" stroke-width="1.5"><circle cx="3172.4" cy="174.7" r="2.8"/><circle cx="3184.3" cy="174.7" r="2.8"/><circle cx="3196.1" cy="174.7" r="2.8"/></g>
<path d="M3290,161L3278.2,172.3M3278.2,162.8V172.3H3287.8M3261.5,188.6L3273.3,177.2M3263.8,177.2H3273.3V186.8" stroke="#111" stroke-width="1.9" stroke-linecap="round" stroke-linejoin="round"/>
<circle cx="3367.2" cy="164" r="2.9" fill="#111"/>
<path d="M3367.2,174.4V186.4" stroke="#111" stroke-width="4.2" stroke-linecap="round"/>
<!-- filter caret -->
<path d="M301.3,291h14l-7,7.2z" fill="#6f7587"/>
<!-- panel icons -->
<g stroke="#111" stroke-width="1.9"><circle cx="933.6" cy="1790.8" r="15.6"/><circle cx="933.6" cy="1790.8" r="8.8"/><path d="M939.8,1784.6L944.6,1779.8M939.8,1797L944.6,1801.8"/></g>
<path d="M1061.8,1786.4h14.6l-7.3,8z" fill="#7b8194"/>
<path d="M1957,1775.7V1805.7H1988.7" stroke="#111" stroke-width="1.8" stroke-linecap="round" stroke-linejoin="round"/>
<path d="M1961.2,1779.5H1971.6M1961.2,1788.7H1984.4M1961.2,1798H1974" stroke="#111" stroke-width="2.3" stroke-linecap="round"/>
<path d="M2211,1786.4h14.6l-7.3,8z" fill="#7b8194"/>
<path d="M3213.6,1775.5V1805.4H3245.2" stroke="#111" stroke-width="1.8" stroke-linecap="round" stroke-linejoin="round"/>
<path d="M3219.7,1790.6V1800M3229,1778V1800M3238.4,1787.6V1800" stroke="#111" stroke-width="2.7" stroke-linecap="round"/>
<path d="M3360.1,1786.2h14.6l-7.3,8z" fill="#7b8194"/>
<!-- hrs axis -->
<path d="M1277.4,2605v16.4l-11.4,-8.2z" fill="#d3d8e2"/>
<path d="M2157,2605v16.4l11.4,-8.2z" fill="#d3d8e2"/>
<path d="M1290,2613.2H1690M1745.5,2613.2H2145" stroke="#d3d8e2" stroke-width="1.8" stroke-dasharray="1.3 1.3"/>
<!-- bottom: unread chats icon -->
<g fill="#444">
<path d="M95,2701c-7,0 -12,4.600000000000001 -12,10.5c0,3.2 1.6,6 4,8c-0.2,2.600000000000001 -1.4,5 -3,6.5c3.6,0 6.6,-1.4 8.6,-3.2c0.8,0.1 1.6,0.2 2.4,0.2c7,0 12,-4.8 12,-10.8s-5,-11.2 -12,-11.2z"/>
<path d="M100,2699c-7.5,0 -13,5 -13,11.5s5.5,11.5 13,11.5c1,0 2,-0.1 3,-0.3c2,1.8 5,3 8,3c-1.4,-1.6 -2.4,-3.6 -2.6,-5.800000000000001c2.8,-2.1 4.6,-5.1 4.6,-8.4c0,-6.5 -5.5,-11.5 -13,-11.5z" stroke="#fde3a0" stroke-width="1"/>
</g>
<circle cx="117.7" cy="2709.3" r="17.2" fill="#fff"/><circle cx="117.7" cy="2709.3" r="14.8" fill="#e8322a"/>
<text x="117.7" y="2715.4" font-size="17" font-weight="bold" fill="#fff" text-anchor="middle">2</text>
<!-- channels -->
<g fill="#999">
<circle cx="304.4" cy="2702.6" r="4.3"/><circle cx="323.8" cy="2702.6" r="4.3"/>
<path d="M298,2716v-5.500000000000001q0,-3.5 3.5,-3.5h3.4q-1.4,3 -0.4,6q-3,1 -3.5,3z"/>
<path d="M329.4,2716v-5.500000000000001q0,-3.5 -3.5,-3.5h-3.4q1.4,3 0.4,6q3,1 3.5,3z"/>
<circle cx="313.8" cy="2709.2" r="6.9"/>
<path d="M303.4,2728.800000000000001v-6.8q0,-5.2 5.2,-5.2q5.2,2.2 10.4,0q5.2,0 5.2,5.2v6.8q-10.4,1.2 -20.8,0z"/>
</g>
<!-- contacts -->
<g fill="#999"><circle cx="529.2" cy="2706.6" r="7.8"/>
<path d="M516.2,2728.6v-7q0,-5.6 5.6,-5.6q7.4,3 14.8,0q5.6,0 5.6,5.6v7q-13,1.400000000000001 -26,0z"/></g>
<!-- zia -->
<g stroke="#111" stroke-width="2.3" stroke-linecap="round" stroke-linejoin="round">
<path d="M2801.8,2709.8H2813.9L2802.1,2737.3Q2800.8,2740.8 2805.2,2740.8H2820.2Q2822.8,2740.8 2824.4,2738.1L2839.1,2716Q2841.5,2713.4 2843.1,2716.8L2849.4,2734.9Q2850.2,2738.2 2847,2737.3L2830.5,2732.3"/>
<path d="M2826.5,2718.7L2820.7,2726.6Q2819.2,2729.3 2822.6,2730.2L2827.3,2731.6"/>
</g><circle cx="2831.7" cy="2706.2" r="1.9" fill="#111"/>
<!-- keyboard -->
<rect x="2926.9" y="2710.2" width="49.4" height="27.6" rx="1" stroke="#111" stroke-width="2.1"/>
<g fill="#111">
<rect x="2931.1" y="2717.1" width="5" height="4.9"/><rect x="2938.4" y="2717.1" width="5" height="4.9"/><rect x="2945.6" y="2717.1" width="5" height="4.9"/><rect x="2953" y="2717.1" width="5" height="4.9"/><rect x="2960.3" y="2717.1" width="5" height="4.9"/><rect x="2967.4" y="2717.1" width="5" height="4.9"/>
<rect x="2931.1" y="2726.3" width="5" height="5.4"/><rect x="2938.2" y="2726.3" width="20" height="5.4"/><rect x="2960.3" y="2726.3" width="5" height="5.4"/><rect x="2967.4" y="2726.3" width="5" height="5.4"/>
</g>
<!-- note with red dot -->
<rect x="3054.7" y="2708.8" width="33.3" height="33" rx="5.5" stroke="#111" stroke-width="2.2"/>
<path d="M3062.3,2717.1H3078.8M3062.3,2725.2H3072.5" stroke="#111" stroke-width="2.1" stroke-linecap="round"/>
<circle cx="3084.4" cy="2733.4" r="12.4" fill="#fff"/>
<circle cx="3084.4" cy="2733.4" r="9.6" fill="#d75a55" stroke="#222" stroke-width="1.3"/>
<!-- clock -->
<circle cx="3187.8" cy="2725.8" r="16.4" stroke="#111" stroke-width="2.3"/>
<path d="M3187.8,2713V2725.8L3195.6,2729.7" stroke="#111" stroke-width="2.3" stroke-linecap="round" stroke-linejoin="round"/>
<!-- chat bubbles -->
<g stroke="#111" stroke-width="2.1" stroke-linejoin="round" stroke-linecap="round">
<path d="M3302.5,2708.8Q3299.5,2707.6 3295.8,2707.6C3287.4,2707.6 3281,2713.6 3281,2721.5C3281,2726.3 3283.5,2730.2 3287.6,2732.9L3287.1,2740.6L3292.6,2736.8Q3300.6,2737.6 3306.4,2733.6"/>
<path d="M3312.4,2707.7C3305.2,2707.7 3299.5,2713.2 3299.5,2720C3299.5,2726.8 3305.2,2732.3 3312.4,2732.3Q3313.6,2732.3 3314.8,2732.1L3319.5,2736L3319.6,2730.2C3323,2728 3325.3,2724.3 3325.3,2720C3325.3,2713.2 3319.6,2707.7 3312.4,2707.7Z" fill="#fff"/>
</g>
<!-- reply box -->
<g stroke="#111" stroke-width="2.2" stroke-linecap="round" stroke-linejoin="round">
<path d="M3433.9,2717.4V2712.2Q3433.9,2708 3429.7,2708H3406.2Q3402,2708 3402,2712.2V2734.6Q3402,2738.8 3406.2,2738.8H3414L3419.4,2744.2"/>
<path d="M3407.8,2721.5H3427.5Q3433.9,2721.5 3433.9,2727.9V2734.6Q3433.9,2738.8 3429.7,2738.8H3421.4"/>
<path d="M3418.6,2713.9L3407.8,2721.5L3418.6,2729.2"/>
</g>
</svg>

</div></body></html>
